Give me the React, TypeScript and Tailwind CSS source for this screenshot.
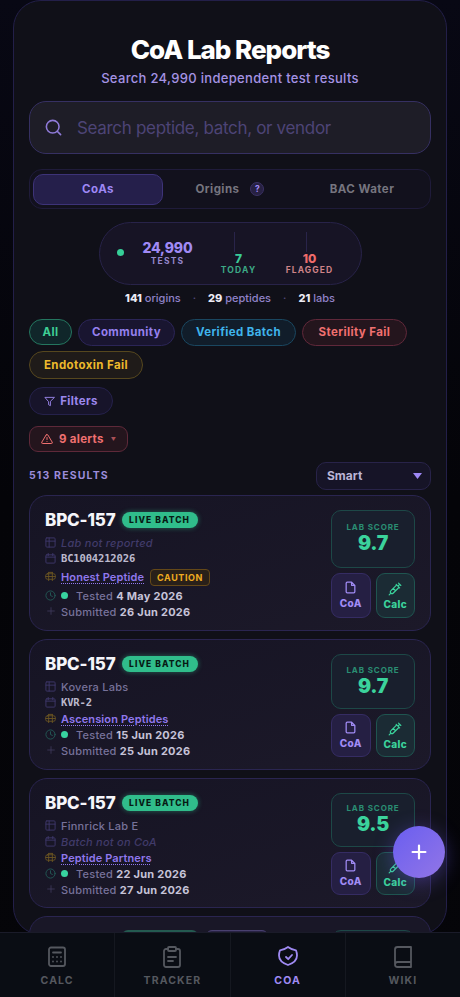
import type { ReactNode } from 'react'

interface Report {
  id: string
  name: string
  lab?: string
  batch?: string
  vendor: string
  caution?: boolean
  tested: string
  submitted: string
  score: string
  height: string
}

const reports: Report[] = [
  {
    id: 'r1',
    name: 'BPC-157',
    batch: 'BC1004212026',
    vendor: 'Honest Peptide',
    caution: true,
    tested: '4 May 2026',
    submitted: '26 Jun 2026',
    score: '9.7',
    height: 'h-[136px]',
  },
  {
    id: 'r2',
    name: 'BPC-157',
    lab: 'Kovera Labs',
    batch: 'KVR-2',
    vendor: 'Ascension Peptides',
    tested: '15 Jun 2026',
    submitted: '25 Jun 2026',
    score: '9.7',
    height: 'h-[131px]',
  },
  {
    id: 'r3',
    name: 'BPC-157',
    lab: 'Finnrick Lab E',
    vendor: 'Peptide Partners',
    tested: '22 Jun 2026',
    submitted: '27 Jun 2026',
    score: '9.5',
    height: 'h-[130px]',
  },
]

const chips = [
  { label: 'All', className: 'h-[26px] w-[43px] border-[#24765f] bg-[#10262a] text-[#3ecf95]' },
  { label: 'Community', className: 'h-[27px] w-[97px] border-[#2b2557] bg-[#191530] text-[#9580ee]' },
  { label: 'Verified Batch', className: 'h-[27px] w-[115px] border-[#1a4760] bg-[#111d2a] text-[#3fb4ec]' },
  { label: 'Sterility Fail', className: 'h-[27px] w-[105px] border-[#60283a] bg-[#24151d] text-[#f07070]' },
  { label: 'Endotoxin Fail', className: 'h-[28px] w-[114px] border-[#56471e] bg-[#1f1b19] text-[#edb92c]' },
]

function LineIcon({ className, width = 2, children }: { className: string; width?: number; children: ReactNode }) {
  return (
    <svg
      viewBox="0 0 24 24"
      fill="none"
      stroke="currentColor"
      strokeWidth={width}
      strokeLinecap="round"
      strokeLinejoin="round"
      className={className}
    >
      {children}
    </svg>
  )
}

function DetailRow({ icon, children, tall }: { icon: ReactNode; children: ReactNode; tall?: boolean }) {
  return (
    <div className={tall ? 'flex h-[21px] items-center' : 'flex h-4 items-center'}>
      <span className="mr-[5px] flex w-[11px] shrink-0 justify-center pb-[2px]">{icon}</span>
      {children}
    </div>
  )
}

function ReportCard({ report }: { report: Report }) {
  return (
    <article
      className={`flex shrink-0 justify-between rounded-[18px] border border-[#2a2550] bg-gradient-to-br from-[#161424] to-[#1c1929] px-[15px] ${report.height}`}
    >
      <div className="flex flex-col pt-[15px] text-[11px] font-medium tracking-[0.25px] text-[#77729a]">
        <div className="mb-[5px] flex h-[19px] items-center">
          <h2 className="text-[17px] font-extrabold tracking-[-0.15px] text-[#f5f5fa]">{report.name}</h2>
          <span className="mb-[2px] ml-[6px] flex h-[16px] w-[76px] items-center justify-center rounded-full bg-[#30bd8b] pt-px text-[8.5px] font-extrabold tracking-[1.05px] text-[#071a14] shadow-[0_0_4px_1px_rgba(48,189,139,0.35)]">
            LIVE BATCH
          </span>
        </div>
        <DetailRow
          icon={
            <LineIcon className="size-[11px] text-[#40396c]">
              <rect x="2" y="2" width="20" height="20" rx="2" />
              <path d="M9 2v20M2 9h20" />
            </LineIcon>
          }
        >
          {report.lab ?? <em className="text-[#413b6a]">Lab not reported</em>}
        </DetailRow>
        <DetailRow
          icon={
            <LineIcon className="size-[11px] text-[#40396c]">
              <rect x="2" y="4" width="20" height="18" rx="2" />
              <path d="M7 1v5M17 1v5M2 9h20" />
            </LineIcon>
          }
        >
          {report.batch ? (
            <span className="font-['DejaVu_Sans_Mono',monospace] text-[10.5px] font-bold tracking-[-0.15px] text-[#bcb9cd]">
              {report.batch}
            </span>
          ) : (
            <em className="text-[#413b6a]">Batch not on CoA</em>
          )}
        </DetailRow>
        <DetailRow
          tall={report.caution}
          icon={
            <LineIcon className="size-[11px] text-[#6a5422]">
              <rect x="1.5" y="6" width="21" height="12" rx="4" />
              <path d="M8 3v18M16 3v18M2 12h20M8 3h8" />
            </LineIcon>
          }
        >
          <a
            href="#"
            className="font-semibold tracking-[0.12px] text-[#9078ed] underline decoration-dotted decoration-1 underline-offset-2"
          >
            {report.vendor}
          </a>
          {report.caution && (
            <span className="ml-[6px] flex h-[17px] w-[60px] items-center justify-center rounded-[4px] border border-[#644818] bg-[#292019] text-[9px] font-bold tracking-[0.6px] text-[#efac20]">
              CAUTION
            </span>
          )}
        </DetailRow>
        <DetailRow
          icon={
            <LineIcon className="size-[11px] text-[#235b56]">
              <circle cx="12" cy="12" r="10" />
              <path d="M12 6v6l4 2" />
            </LineIcon>
          }
        >
          <span className="mr-[8px] mb-px size-[7px] rounded-full bg-[#38d39f]" />
          <span>
            Tested <b className="font-bold text-[#c6c3d8]">{report.tested}</b>
          </span>
        </DetailRow>
        <DetailRow
          icon={
            <LineIcon className="size-[10px] text-[#403b5c]">
              <path d="M12 4v16M4 12h16" />
            </LineIcon>
          }
        >
          <span>
            Submitted <b className="font-bold text-[#c6c3d8]">{report.submitted}</b>
          </span>
        </DetailRow>
      </div>

      <div className="flex w-[84px] flex-col gap-[5px] pt-[14px] pb-[12px]">
        <div className="flex flex-1 flex-col items-center justify-center rounded-[10px] border border-[#1d4847] bg-[#191f2d]">
          <span className="text-[8px] leading-[9px] font-bold tracking-[0.9px] text-[#2a8e73]">LAB SCORE</span>
          <span className="text-[19.5px] leading-[23px] font-black tracking-[-0.2px] text-[#3bd39c]">
            {report.score}
          </span>
        </div>
        <div
          className={`flex gap-[5px] text-[10px] leading-[12px] font-extrabold tracking-[0.4px] ${
            report.caution ? 'h-[45px]' : 'h-[43px]'
          }`}
        >
          <button
            type="button"
            className="flex flex-1 flex-col items-center justify-center gap-[3px] rounded-[9px] border border-[#352c63] bg-[#251f43] pb-[2px] text-[#a18cf5]"
          >
            <LineIcon className="size-[13px]" width={2.3}>
              <path d="M14 2H6a2 2 0 0 0-2 2v16a2 2 0 0 0 2 2h12a2 2 0 0 0 2-2V8zM14 2v6h6" />
            </LineIcon>
            CoA
          </button>
          <button
            type="button"
            className="flex flex-1 flex-col items-center justify-center gap-[2px] rounded-[9px] border border-[#1f5550] bg-[#1b2b34] text-[#3bd39c]"
          >
            <LineIcon className="size-[14px]">
              <path d="m18 2 4 4M17 7l3-3M19 9 8.700 19.300c-1 1-2.500 1-3.400 0l-.6-.6c-1-1-1-2.500 0-3.400L15 5M9 11l4 4M5 19l-3 3M14 4l6 6" />
            </LineIcon>
            Calc
          </button>
        </div>
      </div>
    </article>
  )
}

function NavItem({ label, active, children }: { label: string; active?: boolean; children: ReactNode }) {
  return (
    <a
      href="#"
      className={`flex flex-1 flex-col items-center border-r border-[#151820] pt-[12px] text-[10.5px] leading-[14px] font-bold tracking-[1.1px] last:border-r-0 ${
        active ? 'text-[#9f8af2]' : 'text-[#55585f]'
      }`}
    >
      <LineIcon className="mb-[5px] size-6" width={1.8}>
        {children}
      </LineIcon>
      {label}
    </a>
  )
}

export default function App() {
  return (
    <div className="relative flex h-[997px] w-[460px] flex-col overflow-hidden bg-gradient-to-b from-[#080814] via-[#040408] to-[#050509] font-['Inter',sans-serif]">
      <main className="mx-[13px] flex h-[935px] shrink-0 flex-col overflow-hidden rounded-[28px] border border-[#231f49] bg-[#101018] px-[15px]">
        <header className="flex h-[100px] shrink-0 flex-col items-center pt-[33px]">
          <h1 className="text-[26px] leading-[32px] font-extrabold tracking-[-1.02px] text-white">CoA Lab Reports</h1>
          <p className="mt-[2px] text-[13px] leading-[20px] font-medium tracking-[0.32px] text-[#a593e4]">
            Search 24,990 independent test results
          </p>
        </header>

        <label className="flex h-[53px] shrink-0 items-center rounded-[17px] border border-[#363062] bg-[#1e1d27] pl-[14px]">
          <LineIcon className="size-[19px] text-[#8f7ad8]">
            <circle cx="11" cy="11" r="8" />
            <path d="m21 21-4.300-4.300" />
          </LineIcon>
          <input
            placeholder="Search peptide, batch, or vendor"
            className="mt-[2px] ml-[14px] w-[320px] bg-transparent text-[17px] tracking-[-0.32px] outline-none placeholder:text-[#4d4476]"
          />
        </label>

        <nav className="mt-[15px] flex h-[40px] shrink-0 items-center rounded-[13px] border border-[#1f1b3a] bg-[#12111d] px-[3px] text-[11.5px] font-bold tracking-[0.45px] text-[#76757f]">
          <button
            type="button"
            className="h-[31px] w-[130px] rounded-[10px] border border-[#3d3378] bg-[#251f4b] pt-[2px] text-[#9e88f5]"
          >
            CoAs
          </button>
          <button type="button" className="flex h-[31px] w-[134px] items-center justify-center gap-[11px]">
            <span className="pt-[2px]">Origins</span>
            <span className="flex size-[14px] items-center justify-center rounded-full border border-[#3b3264] bg-[#272142] text-[8.5px] tracking-normal text-[#a18cf5]">
              ?
            </span>
          </button>
          <button type="button" className="h-[31px] flex-1 pt-[2px]">
            BAC Water
          </button>
        </nav>

        <section className="mx-auto mt-[13px] flex h-[63px] w-[263px] shrink-0 rounded-full border border-[#282349] bg-[#171425] pl-[17px] text-center">
          <span className="mt-[26px] size-[7px] rounded-full bg-[#36cf98]" />
          <div className="ml-[14px] w-[60px] pt-[17px]">
            <div className="text-[14px] leading-[15px] font-extrabold tracking-[-0.1px] text-[#a08af5]">24,990</div>
            <div className="text-[8.5px] leading-[12px] font-bold tracking-[1.2px] text-[#9687cd]">TESTS</div>
          </div>
          <div className="ml-[20px] flex w-[42px] flex-col items-center">
            <span className="mt-[9px] mr-[8px] h-[20px] w-px bg-[#29244a]" />
            <div className="text-[12px] leading-[14px] font-extrabold text-[#3acb98]">7</div>
            <div className="text-[8.5px] leading-[9px] font-bold tracking-[1.2px] text-[#3ca985]">TODAY</div>
          </div>
          <div className="ml-[22px] flex w-[56px] flex-col items-center">
            <span className="mt-[9px] mr-[7px] h-[20px] w-px bg-[#29244a]" />
            <div className="text-[12px] leading-[14px] font-extrabold text-[#ef6b6b]">10</div>
            <div className="text-[8.5px] leading-[9px] font-bold tracking-[1.1px] text-[#ce8388]">FLAGGED</div>
          </div>
        </section>

        <div className="mt-[6px] flex h-[15px] shrink-0 items-center justify-center gap-[12px] text-[11px] leading-[15px] font-medium text-[#9182c9]">
          <span>
            <b className="font-extrabold text-[#ecebf5]">141</b> origins
          </span>
          <span className="text-[#544b7c]">·</span>
          <span>
            <b className="font-extrabold text-[#ecebf5]">29</b> peptides
          </span>
          <span className="text-[#544b7c]">·</span>
          <span>
            <b className="font-extrabold text-[#ecebf5]">21</b> labs
          </span>
        </div>

        <div className="mt-[13px] flex h-[60px] shrink-0 flex-wrap content-start gap-x-[6px] gap-y-[5px]">
          {chips.map((chip) => (
            <button
              key={chip.label}
              type="button"
              className={`rounded-full border pt-px text-[11.5px] font-bold tracking-[0.4px] ${chip.className}`}
            >
              {chip.label}
            </button>
          ))}
        </div>

        <button
          type="button"
          className="mt-[8px] flex h-[28px] w-[84px] shrink-0 items-center justify-center gap-[5px] rounded-full border border-[#25214b] bg-[#17142a] pt-px text-[11.5px] font-bold tracking-[0.35px] text-[#9c87ed]"
        >
          <LineIcon className="size-[11px]">
            <path d="M22 3H2l8 9.500V19l4 2v-8.500z" />
          </LineIcon>
          Filters
        </button>

        <button
          type="button"
          className="mt-[11px] flex h-[26px] w-[99px] shrink-0 items-center rounded-[9px] border border-[#5e2939] bg-[#24151d] pt-[2px] pl-[11px] text-[11.5px] font-bold tracking-[0.3px] whitespace-nowrap text-[#ef7070]"
        >
          <LineIcon className="mr-[6px] mb-[3px] size-[12px]">
            <path d="M10.300 3.900 1.800 18a2 2 0 0 0 1.700 3h17a2 2 0 0 0 1.700-3L13.700 3.900a2 2 0 0 0-3.400 0zM12 9v4M12 17h.01" />
          </LineIcon>
          9 alerts
          <span className="ml-[7px] text-[5px] text-[#a95057]">▼</span>
        </button>

        <div className="mt-[10px] flex h-[28px] shrink-0 items-center justify-between">
          <span className="text-[10.5px] font-bold tracking-[1.15px] text-[#9c8cdb]">513 RESULTS</span>
          <button
            type="button"
            className="flex h-[28px] w-[115px] items-center justify-between rounded-[10px] border border-[#282349] bg-[#161427] pr-[8px] pl-[10px] text-[12px] font-bold text-[#bbb5d6]"
          >
            Smart
            <svg viewBox="0 0 9 6" className="h-[6px] w-[9px] fill-[#9e88f5]">
              <path d="M0 0h9L4.500 6z" />
            </svg>
          </button>
        </div>

        <div className="mt-[5px] flex flex-col gap-[8px]">
          {reports.map((report) => (
            <ReportCard key={report.id} report={report} />
          ))}
          <article className="flex h-[131px] shrink-0 items-start rounded-[18px] border border-[#2a2550] bg-[#191727] pt-[13px] pr-[15px] pl-[92px]">
            <span className="h-[16px] w-[76px] rounded-[6px] bg-[#245a50]" />
            <span className="ml-[8px] h-[16px] w-[62px] rounded-[6px] border border-[#494070] bg-[#292344]" />
            <span className="ml-auto h-[57px] w-[84px] rounded-[10px] border border-[#1d4847] bg-[#191f2d]" />
          </article>
        </div>
      </main>

      <button
        type="button"
        aria-label="Add report"
        className="absolute top-[826px] left-[393px] flex size-[52px] items-center justify-center rounded-full bg-gradient-to-br from-[#6a5df0] to-[#9275e6] text-white shadow-[0_4px_20px_rgba(110,90,240,0.4)]"
      >
        <LineIcon className="size-[22px]" width={2.4}>
          <path d="M12 5v14M5 12h14" />
        </LineIcon>
      </button>

      <nav className="absolute bottom-0 left-0 flex h-[65px] w-[460px] border-t border-[#1a1b29] bg-[#0a0d14]">
        <NavItem label="CALC">
          <rect x="4" y="2.500" width="16" height="18.500" rx="2" />
          <path d="M8 7.500h8M8 12h.01M12 12h.01M16 12h.01M8 16.500h.01M12 16.500h.01M16 16.500h.01" />
        </NavItem>
        <NavItem label="TRACKER">
          <path d="M16 4h2a2 2 0 0 1 2 2v14a2 2 0 0 1-2 2H6a2 2 0 0 1-2-2V6a2 2 0 0 1 2-2h2M8 12h8M8 16h5" />
          <rect x="8" y="2" width="8" height="4" rx="1" />
        </NavItem>
        <NavItem label="COA" active>
          <path d="M12 2c2.500 1.900 5 3 8 3.300.8 2 1 3.700 1 5.200 0 4.700-3.800 7.700-9 9.500-5.200-1.800-9-4.800-9-9.500 0-1.500.2-3.200 1-5.200C7 5 9.500 3.900 12 2z" />
          <path d="m10 12 2.200 2.200L16 10" />
        </NavItem>
        <NavItem label="WIKI">
          <path d="M4 19.500A2.500 2.500 0 0 1 6.500 17H20M4 19.500A2.500 2.500 0 0 0 6.500 22H20V2H6.500A2.500 2.500 0 0 0 4 4.500z" />
        </NavItem>
      </nav>
    </div>
  )
}
